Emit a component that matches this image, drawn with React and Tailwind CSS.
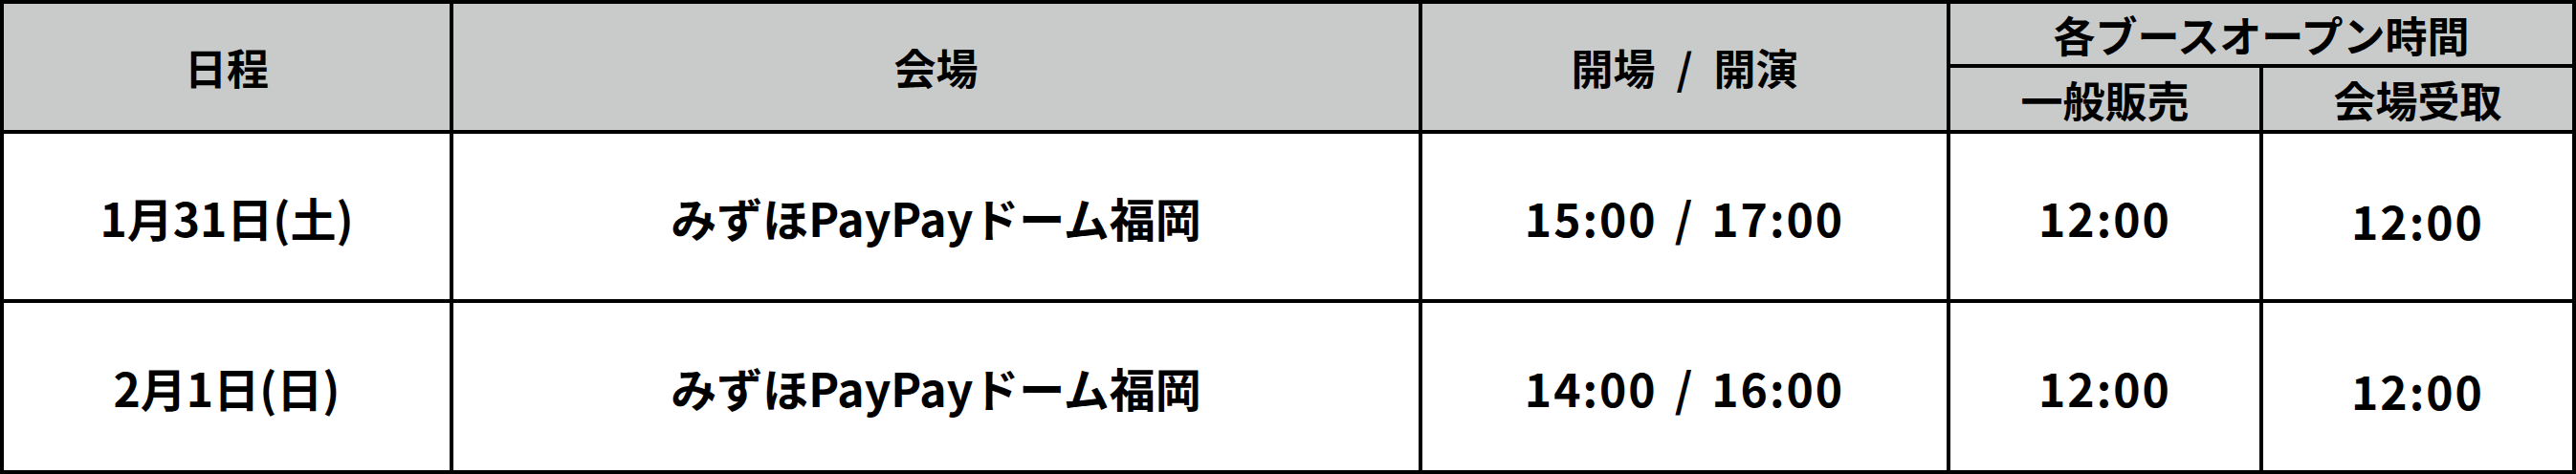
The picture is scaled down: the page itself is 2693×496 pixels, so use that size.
export default function App() {
  const font = { fontFamily: '"Noto Sans CJK JP", "Noto Sans", sans-serif' };
  const head = "bg-[#c9cbca] flex items-center justify-center text-black font-bold text-[44px] leading-none";
  const cell = "bg-white flex items-center justify-center text-black font-bold text-[48px] leading-none";
  const Time = ({ a, b }) => (
    <div className={`${cell} tracking-[2px]`}>
      <span>{a}</span>
      <span className="mx-[18px]">/</span>
      <span>{b}</span>
    </div>
  );
  return (
    <div className="w-[2693px] h-[496px] bg-white" style={font}>
      <div className="grid bg-black p-[4px] gap-[4px] w-[2693px] h-[496px] grid-cols-[466px_1009px_548px_323px_323px] grid-rows-[63px_65px_173px_175px]">
        <div className={`${head} row-span-2`}>日程</div>
        <div className={`${head} row-span-2`}>会場</div>
        <div className={`${head} row-span-2`}>
          <span>開場</span>
          <span className="mx-[22px]">/</span>
          <span>開演</span>
        </div>
        <div className={`${head} col-span-2`}>各ブースオープン時間</div>
        <div className={head}>一般販売</div>
        <div className={head}>会場受取</div>

        <div className={cell}>1月31日(土)</div>
        <div className={`${cell} text-[47px]`}>みずほPayPayドーム福岡</div>
        <Time a="15:00" b="17:00" />
        <div className={`${cell} tracking-[2px]`}>12:00</div>
        <div className={`${cell} tracking-[2px] pt-[6px]`}>12:00</div>

        <div className={cell}>2月1日(日)</div>
        <div className={`${cell} text-[47px]`}>みずほPayPayドーム福岡</div>
        <Time a="14:00" b="16:00" />
        <div className={`${cell} tracking-[2px]`}>12:00</div>
        <div className={`${cell} tracking-[2px] pt-[6px]`}>12:00</div>
      </div>
    </div>
  );
}
